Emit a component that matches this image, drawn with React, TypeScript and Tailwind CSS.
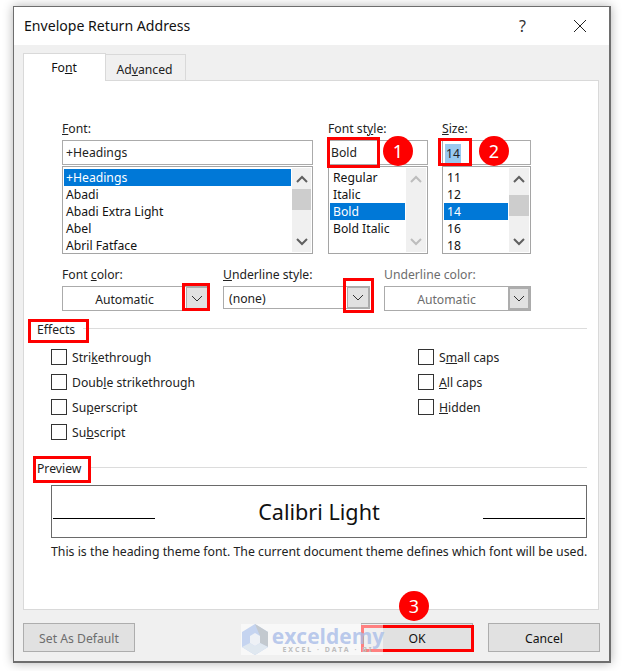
import React from "react";

const font = { fontFamily: '"Noto Sans", sans-serif' };

function Chevron({ up = false, color = "#606060", w = 14, sw = 2 }: { up?: boolean; color?: string; w?: number; sw?: number }) {
  return (
    <svg width={w} height={8} viewBox={w === 14 ? "0 0 14 8" : "2 0 10 8"} fill="none">
      <path d={up ? "M2 7 L7 2 L12 7" : "M2 1 L7 6 L12 1"} stroke={color} strokeWidth={sw} />
    </svg>
  );
}

function ListBox({ items, sel, width, listW, thumb, disabled, itemPl = "pl-[3px]" }: { items: string[]; sel: number; width: string; listW: string; thumb?: string; disabled?: boolean; itemPl?: string }) {
  return (
    <div className={`${width} h-[88px] border border-[#a5a5a5] bg-white flex p-[1px] mt-[1px]`}>
      <div className={`${listW} pt-[1px] shrink-0`}>
        {items.map((t, i) => (
          <div key={t} className={`h-[17px] leading-[17px] whitespace-nowrap ${itemPl} ${i === sel ? "bg-[#0078d7] text-white" : "text-[#111]"}`}>
            {t}
          </div>
        ))}
      </div>
      <div className="flex-1 ml-[1px] bg-[#f0f0f0] flex flex-col items-center">
        <div className="h-[21px] flex items-center justify-center shrink-0">
          <Chevron up color={disabled ? "#bdbdbd" : "#606060"} />
        </div>
        {thumb && <div className={`w-full h-[21px] bg-[#cdcdcd] shrink-0 ${thumb}`} />}
        <div className="mt-auto h-[20px] flex items-center justify-center shrink-0">
          <Chevron color={disabled ? "#bdbdbd" : "#606060"} />
        </div>
      </div>
    </div>
  );
}

function Label({ children, className = "text-[#222]" }: { children: React.ReactNode; className?: string }) {
  return <div className={`h-[20px] leading-[18px] ${className}`}>{children}</div>;
}

function Combo({ text, width, height, center, disabled, thick }: { text: string; width: string; height: string; center?: boolean; disabled?: boolean; thick?: boolean }) {
  return (
    <div className={`${width} ${height} border border-[#ababab] bg-white flex`}>
      <div className={`flex-1 flex items-center pt-[3px] ${center ? "justify-center" : "pl-[5px]"} ${disabled ? "text-[#6d6d6d]" : "text-[#222]"}`}>{text}</div>
      <div className={`w-[22px] bg-[#e1e1e1] flex items-center justify-center ${thick ? "border-2 border-[#adadad]" : "border border-[#adadad]"}`}>
        <Chevron w={10} sw={1} color="#333" />
      </div>
    </div>
  );
}

function Check({ children }: { children: React.ReactNode }) {
  return (
    <div className="h-[16px] flex items-center">
      <div className="w-[16px] h-[16px] border border-[#333] bg-white shrink-0" />
      <span className="ml-[5px] pt-[2px] leading-[16px] text-[#222] whitespace-nowrap">{children}</span>
    </div>
  );
}

function GroupHead({ title, mt }: { title: string; mt: string }) {
  return (
    <div className={`flex items-center h-[20px] ${mt}`}>
      <span className="text-[#222] pt-[2px]">{title}</span>
      <div className="flex-1 h-[1px] bg-[#dcdcdc] ml-[8px] mb-[2px]" />
    </div>
  );
}

function Btn({ children, disabled, width = "w-[112px]" }: { children: React.ReactNode; disabled?: boolean; width?: string }) {
  return (
    <div className={`${width} h-[29px] bg-[#e1e1e1] border border-[#adadad] flex items-center justify-center pt-[3px] ${disabled ? "text-[#6d6d6d]" : "text-[#111]"}`}>
      {children}
    </div>
  );
}

function Badge({ n, className }: { n: string; className: string }) {
  return (
    <div className={`absolute w-[30px] h-[30px] rounded-full bg-[#fe0000] text-white text-[18px] flex items-center justify-center ${className}`}>{n}</div>
  );
}

function RedBox({ className }: { className: string }) {
  return <div className={`absolute border-[3px] border-[#fe0000] ${className}`} />;
}

export default function App() {
  return (
    <div className="relative w-[624px] h-[671px] bg-white overflow-hidden text-[12.2px]" style={font}>
      <div className="absolute left-[13px] top-[6px] w-[598px] h-[657px] border border-[#6e6e6e] border-b-2 border-r-2 bg-[#f0f0f0] flex flex-col shadow-[0_0_10px_rgba(0,0,0,0.3)]">
        {/* Title bar */}
        <div className="h-[38px] bg-white flex items-center pl-[10px] shrink-0">
          <span className="text-[14.1px] leading-[16px] mb-[1px] text-[#111]">Envelope Return Address</span>
          <span className="ml-auto text-[16px] text-[#333] mr-[47px]">?</span>
          <svg width="14" height="14" viewBox="0 0 14 14" className="mr-[22px]">
            <path d="M1 1 L13 13 M13 1 L1 13" stroke="#222" strokeWidth="1" />
          </svg>
        </div>

        {/* Tabs */}
        <div className="flex items-end h-[36px] pl-[9px] shrink-0 relative z-10">
          <div className="w-[83px] h-[28px] bg-white border border-b-0 border-[#d9d9d9] flex items-center justify-center text-[#111] pt-[2px] pr-[1px]">
            <span>Fo<u>n</u>t</span>
          </div>
          <div className="w-[80px] h-[26px] mb-[1px] bg-[#f0f0f0] border border-b-0 border-l-0 border-[#d9d9d9] flex items-center justify-center text-[#222] pt-[5px] pr-[2px]">
            <span>Ad<u>v</u>anced</span>
          </div>
        </div>

        {/* Panel */}
        <div className="ml-[9px] w-[576px] h-[530px] -mt-[1px] bg-white border border-[#d9d9d9] pt-[39px] shrink-0">
          <div className="flex pl-[38px]">
            <div className="w-[251px]">
              <Label><u>F</u>ont:</Label>
              <div className="h-[25px] border border-[#ababab] pl-[3px] pt-[2px] flex items-center text-[#222]">+Headings</div>
              <ListBox items={["+Headings", "Abadi", "Abadi Extra Light", "Abel", "Abril Fatface"]} sel={0} width="w-[251px]" listW="w-[227px]" thumb="mt-[0px]" itemPl="pl-[2px]" />
            </div>
            <div className="w-[100px] ml-[15px]">
              <Label>Font st<u>y</u>le:</Label>
              <div className="h-[25px] border border-[#ababab] pl-[2px] pt-[2px] flex items-center text-[#222]">Bold</div>
              <ListBox items={["Regular", "Italic", "Bold", "Bold Italic"]} sel={2} width="w-[100px]" listW="w-[75px]" disabled />
            </div>
            <div className="w-[89px] ml-[14px]">
              <Label><u>S</u>ize:</Label>
              <div className="h-[25px] border border-[#ababab] pl-[2px] flex items-center text-[#222]">
                <span className="bg-[#99c9ef] px-[1px] leading-[18px] pt-[1px] mt-[1px]">14</span>
              </div>
              <ListBox items={["11", "12", "14", "16", "18"]} sel={2} width="w-[89px]" listW="w-[64px]" thumb="mt-[6px]" />
            </div>
          </div>

          <div className="flex pl-[38px] mt-[12px]">
            <div className="w-[147px]">
              <Label>Font <u>c</u>olor:</Label>
              <Combo text="Automatic" width="w-[147px]" height="h-[25px]" center />
            </div>
            <div className="w-[147px] ml-[14px]">
              <Label><u>U</u>nderline style:</Label>
              <Combo text="(none)" width="w-[147px]" height="h-[23px]" />
            </div>
            <div className="w-[147px] ml-[14px]">
              <Label className="text-[#6d6d6d]">Underline color:</Label>
              <Combo text="Automatic" width="w-[147px]" height="h-[25px]" center disabled thick />
            </div>
          </div>

          <div className="ml-[13px] mr-[11px]">
            <GroupHead title="Effects" mt="mt-[8px]" />
          </div>
          <div className="ml-[27px] mt-[10px] grid grid-cols-[367px_1fr] gap-y-[9px]">
            <Check>Stri<u>k</u>ethrough</Check>
            <Check>S<u>m</u>all caps</Check>
            <Check>Doub<u>l</u>e strikethrough</Check>
            <Check><u>A</u>ll caps</Check>
            <Check>Su<u>p</u>erscript</Check>
            <Check><u>H</u>idden</Check>
            <Check>Su<u>b</u>script</Check>
          </div>

          <div className="ml-[13px] mr-[11px]">
            <GroupHead title="Preview" mt="mt-[18px]" />
          </div>
          <div className="ml-[27px] w-[536px] h-[53px] mt-[7px] border border-[#6a6a6a] flex items-end pb-[18px] px-[1px] justify-between relative">
            <div className="w-[102px] h-[1px] bg-black" />
            <span className="text-[21.6px] text-[#111] leading-[28px] absolute left-0 right-0 text-center top-[12px]">Calibri Light</span>
            <div className="w-[102px] h-[1px] bg-black" />
          </div>
          <div className="ml-[27px] mt-[5px] h-[18px] leading-[18px] text-[12.3px] text-[#222] whitespace-nowrap">
            This is the heading theme font. The current document theme defines which font will be used.
          </div>
        </div>

        {/* Buttons */}
        <div className="flex mt-[13px] pl-[9px] pr-[9px]">
          <Btn disabled>Set As Default</Btn>
          <div className="ml-auto flex gap-[15px]">
            <Btn>OK</Btn>
            <Btn>Cancel</Btn>
          </div>
        </div>
      </div>

      {/* Annotations */}
      <RedBox className="left-[327px] top-[137px] w-[53px] h-[31px]" />
      <RedBox className="left-[438px] top-[138px] w-[34px] h-[28px]" />
      <RedBox className="left-[182px] top-[283px] w-[28px] h-[28px]" />
      <RedBox className="left-[343px] top-[278px] w-[31px] h-[35px]" />
      <RedBox className="left-[28px] top-[319px] w-[61px] h-[24px]" />
      <RedBox className="left-[33px] top-[456px] w-[58px] h-[27px]" />
      <RedBox className="left-[361px] top-[625px] w-[113px] h-[27px]" />
      <Badge n="1" className="left-[383px] top-[136px]" />
      <Badge n="2" className="left-[479px] top-[136px]" />
      <Badge n="3" className="left-[399px] top-[591px]" />

      {/* Watermark */}
      <div className="absolute left-[241px] top-[624px] w-[142px] h-[31px] flex items-center bg-white/50">
        <svg width="28" height="31" viewBox="0 0 28 31" className="shrink-0">
          <path d="M14 0 L27 8 L27 23 L14 31 L1 23 L1 8 Z" fill="#c5d4f0" />
          <path d="M14 0 L27 8 L27 23 L19 19 L19 12 Z" fill="#c3c9cf" />
          <path d="M1 23 L9 19 L14 22 L19 19 L27 23 L14 31 Z" fill="#e0e8f0" />
          <path d="M14 9 L19 12 L19 19 L14 22 L9 19 L9 12 Z" fill="#eef1f6" />
        </svg>
        <div className="ml-[4px] flex flex-col items-center w-[110px] shrink-0 mt-[1px]">
          <span className="text-[21px] leading-[20px] font-bold text-[#a9bde8]/80 whitespace-nowrap" style={{ fontFamily: '"Open Sans", sans-serif' }}>exceldemy</span>
          <span className="text-[7px] leading-[8px] font-bold tracking-[2px] text-[#bdbdbd] whitespace-nowrap">EXCEL · DATA · BI</span>
        </div>
      </div>
    </div>
  );
}
